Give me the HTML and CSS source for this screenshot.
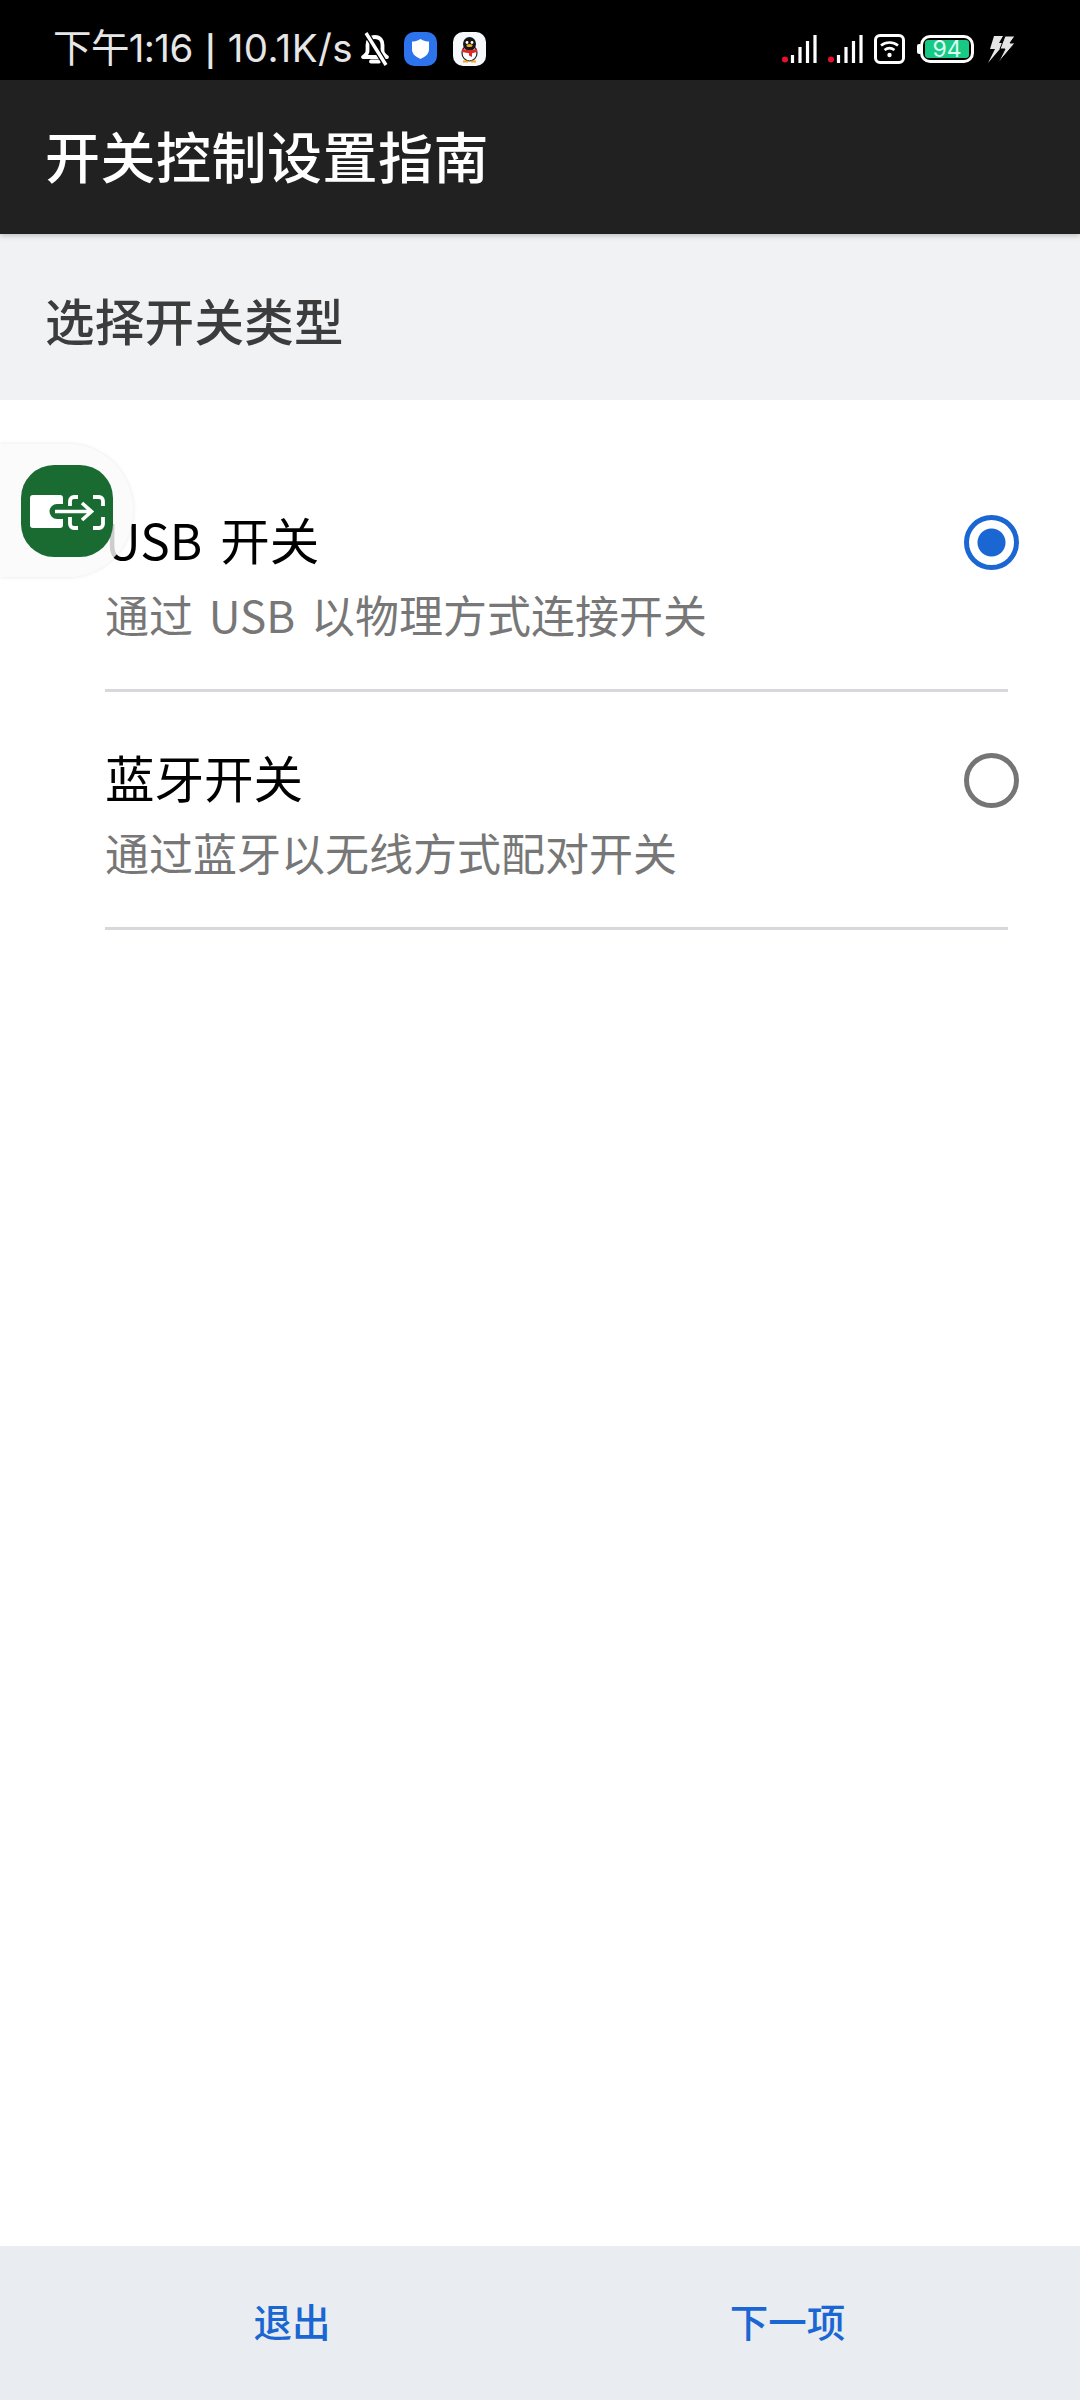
FILE: index.html
```html
<!DOCTYPE html>
<html lang="zh-CN">
<head>
<meta charset="utf-8">
<title>开关控制设置指南</title>
<link rel="stylesheet" href="styles.css">
</head>
<body>
<div class="screen">
  <header class="status">
    <div class="status-left">
      <span class="status-text">下午1:16<span class="status-sep">|</span><span class="status-speed">10.1K/s</span></span>
      <svg class="ic-bell" viewBox="0 0 30 34" width="30" height="34">
        <path d="M15 5c-5 0-7.500 3.500-7.500 8v6c0 2-1.500 4-4.500 6h24c-3-2-4.500-4-4.500-6v-6c0-4.500-2.500-8-7.500-8z" fill="none" stroke="#fff" stroke-width="3.800" stroke-linejoin="round"/>
        <path d="M11 29.500h8" stroke="#fff" stroke-width="3.800" stroke-linecap="round"/>
        <path d="M6 1l20 32" stroke="#000" stroke-width="6"/>
        <path d="M6 1l20 32" stroke="#fff" stroke-width="3.400"/>
      </svg>
      <svg class="ic-shield" viewBox="0 0 33 34" width="33" height="34">
        <rect width="33" height="34" rx="10" fill="#2d74ec"/>
        <path d="M16.500 7c3 1.800 6 2.600 8.500 2.600v8c0 4.500-4 7.400-8.500 9.400-4.500-2-8.500-4.900-8.500-9.400v-8c2.500 0 5.500-.8 8.500-2.600z" fill="#fff"/>
      </svg>
      <svg class="ic-qq" viewBox="0 0 33 34" width="33" height="34">
        <rect width="33" height="34" rx="10" fill="#f6f8fc"/>
        <ellipse cx="16.500" cy="21" rx="7.500" ry="8" fill="#fff" stroke="#222" stroke-width="1.200"/>
        <ellipse cx="16.500" cy="12" rx="6.500" ry="7" fill="#151515"/>
        <circle cx="14" cy="10.500" r="1.400" fill="#fff"/>
        <circle cx="19" cy="10.500" r="1.400" fill="#fff"/>
        <ellipse cx="16.500" cy="13.500" rx="3" ry="1.500" fill="#f0a722"/>
        <path d="M9 16.500c5 2 10 2 15 0v3.500l-5 1.200v3.800l-3-1.500v-2.300l-7-1.200z" fill="#d92b2b"/>
        <path d="M10 29.500h5M18 29.500h5" stroke="#f0a722" stroke-width="1.800"/>
      </svg>
    </div>
    <div class="status-right">
      <svg class="ic-signal" viewBox="0 0 36 28" width="36" height="28">
        <circle cx="3" cy="24.500" r="3" fill="#e8112d"/>
        <path d="M10.500 28v-8M18 28V12M25.500 28V6M33 28V0" stroke="#fff" stroke-width="3.200"/>
      </svg>
      <svg class="ic-signal" viewBox="0 0 36 28" width="36" height="28">
        <circle cx="3" cy="24.500" r="3" fill="#e8112d"/>
        <path d="M10.500 28v-8M18 28V12M25.500 28V6M33 28V0" stroke="#fff" stroke-width="3.200"/>
      </svg>
      <svg class="ic-wifi" viewBox="0 0 31 30" width="31" height="30">
        <rect x="1.500" y="1.500" width="28" height="27" rx="4.500" fill="none" stroke="#fff" stroke-width="3"/>
        <path d="M7 11.500c5-4 12-4 17 0M10.500 16c3-2.200 7-2.200 10 0" fill="none" stroke="#fff" stroke-width="2.600"/>
        <circle cx="15.500" cy="21" r="2.200" fill="#fff"/>
      </svg>
      <div class="battery">
        <span class="battery-cap"></span>
        <div class="battery-body"><span class="battery-level">94</span></div>
      </div>
      <svg class="ic-bolt" viewBox="0 0 28 28" width="28" height="28">
        <path d="M6 1h9l-4 7h6L0 28l7-14H2z" fill="#e6e6e6"/>
        <path d="M17 1h10l-5 7h5L10 28l7-14h-5z" fill="#e6e6e6" stroke="#000" stroke-width="1"/>
      </svg>
    </div>
  </header>

  <div class="toolbar"><h1 class="toolbar-title">开关控制设置指南</h1></div>
  <div class="section-head"><h2 class="section-title">选择开关类型</h2></div>

  <main class="options">
    <div class="option">
      <div class="option-text">
        <div class="option-name">USB 开关</div>
        <div class="option-desc">通过 USB 以物理方式连接开关</div>
      </div>
      <span class="radio radio-on"></span>
    </div>
    <div class="option">
      <div class="option-text">
        <div class="option-name">蓝牙开关</div>
        <div class="option-desc">通过蓝牙以无线方式配对开关</div>
      </div>
      <span class="radio"></span>
    </div>
  </main>

  <footer class="actions">
    <div class="action">退出</div>
    <div class="action">下一项</div>
  </footer>

  <div class="float-ball">
    <svg class="float-icon" viewBox="0 0 92 92" width="92" height="92">
      <rect width="92" height="92" rx="33" fill="#1a6b32"/>
      <path d="M12 30h27a3 3 0 0 1 3 3v6H36a7.500 7.500 0 0 0 0 15h6v6a3 3 0 0 1-3 3H12a3 3 0 0 1-3-3V33a3 3 0 0 1 3-3z" fill="#fff"/>
      <path d="M34 46.500h36M61 38l9.500 8.500-9.500 8.500" fill="none" stroke="#fff" stroke-width="3.600"/>
      <path d="M57 32h-4a4 4 0 0 0-4 4v5M49 52v7a4 4 0 0 0 4 4h4M72 32h6a4 4 0 0 1 4 4v5M82 52v7a4 4 0 0 1-4 4h-6" fill="none" stroke="#fff" stroke-width="3.800"/>
    </svg>
  </div>
</div>
</body>
</html>
```

FILE: styles.css
```css
* { box-sizing: border-box; }

html, body {
  margin: 0;
  padding: 0;
  background: #fff;
}

body {
  font-family: "Noto Sans CJK SC", "Noto Sans", sans-serif;
}

.screen {
  position: relative;
  width: 1080px;
  height: 2400px;
  display: flex;
  flex-direction: column;
  overflow: hidden;
}

/* Status bar */
.status {
  height: 80px;
  flex: none;
  background: #000;
  display: flex;
  justify-content: space-between;
  align-items: center;
  padding: 18px 64px 0 53px;
}

.status-left, .status-right {
  display: flex;
  align-items: center;
}

.status-text {
  font-family: Inter, "Noto Sans CJK SC", sans-serif;
  font-size: 38.500px;
  line-height: 40px;
  color: #e6e6e6;
  white-space: nowrap;
  letter-spacing: -0.6px;
}

.status-sep {
  display: inline-block;
  width: 35px;
  text-align: center;
  font-size: 30px;
  font-weight: 600;
}

.status-speed { letter-spacing: 0.4px; }

.ic-bell { margin-left: 7px; }
.ic-shield { margin-left: 14px; }
.ic-qq { margin-left: 16px; }

.status-right { gap: 10px; }

.battery {
  display: flex;
  align-items: center;
  margin-left: 2px;
  margin-right: 4px;
}

.battery-cap {
  width: 3px;
  height: 10px;
  background: #fff;
  border-radius: 2px 0 0 2px;
}

.battery-body {
  width: 54px;
  height: 28px;
  border: 3px solid #fff;
  border-radius: 10px;
  padding: 2px;
}

.battery-level {
  display: block;
  height: 100%;
  background: #17c984;
  border-radius: 3px;
  color: #dcfff2;
  font-family: Inter, sans-serif;
  font-size: 23px;
  line-height: 18px;
  text-align: center;
}

/* App bar */
.toolbar {
  height: 154px;
  flex: none;
  background: #212121;
  display: flex;
  align-items: center;
  padding: 0 45px 6px;
  box-shadow: 0 2px 5px rgba(0, 0, 0, 0.2);
  z-index: 1;
}

.toolbar-title {
  margin: 0;
  font-size: 55px;
  font-weight: 500;
  letter-spacing: 0.5px;
  color: #fff;
}

.section-head {
  height: 166px;
  flex: none;
  background: #f0f2f4;
  display: flex;
  align-items: center;
  padding: 4px 45px 0;
}

.section-title {
  margin: 0;
  font-size: 49.500px;
  font-weight: 500;
  letter-spacing: 0.3px;
  color: #3c3c3c;
}

/* Option list */
.options {
  flex: 1;
  padding: 54px 0 0 105px;
}

.option {
  position: relative;
  width: 903px;
  height: 238px;
  padding-top: 52px;
  border-bottom: 3px solid #d8d8dc;
}

.option-name {
  font-size: 49.500px;
  line-height: 66px;
  color: #000;
  word-spacing: 7px;
}

.option-desc {
  font-size: 44px;
  line-height: 60px;
  color: #777;
  margin-top: 12px;
  word-spacing: 6px;
}

.radio {
  position: absolute;
  right: -11px;
  top: 61px;
  width: 55px;
  height: 55px;
  border: 5.500px solid #757575;
  border-radius: 50%;
  background: #fff;
}

.radio-on {
  border-color: #1a66d2;
  background: radial-gradient(circle, #1a66d2 0 13.500px, #fff 14.500px);
}

/* Bottom actions */
.actions {
  height: 154px;
  flex: none;
  background: #e9edf1;
  display: grid;
  grid-template-columns: 584px 407px;
  align-items: center;
  padding-bottom: 6px;
}

.action {
  font-size: 38.500px;
  font-weight: 500;
  color: #1a66d2;
  text-align: center;
}

/* Floating switch shortcut, sits above the list */
.float-ball {
  position: absolute;
  left: 0;
  top: 444px;
  width: 133px;
  height: 133px;
  border-radius: 0 66px 66px 0;
  background: rgba(250, 250, 250, 0.82);
  box-shadow: 0 0 4px rgba(0, 0, 0, 0.1);
  display: flex;
  align-items: center;
  padding-left: 21px;
}
```
